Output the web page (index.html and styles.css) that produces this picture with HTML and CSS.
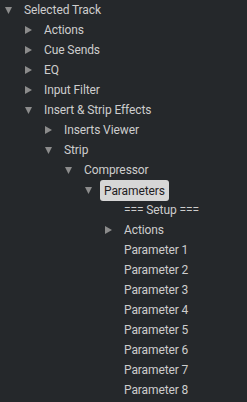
FILE: index.html
```html
<!DOCTYPE html>
<html>
<head>
<meta charset="utf-8">
<link rel="stylesheet" href="styles.css">
</head>
<body>
<div class="tree">
  <div class="row l0"><span class="tw"><svg class="down" viewBox="0 0 7 7"><polygon points="0,0 7,0 3.5,7"/></svg></span><span class="label">Selected Track</span></div>
  <div class="row l1"><span class="tw"><svg class="right" viewBox="0 0 7 8"><polygon points="0,0 7,4 0,8"/></svg></span><span class="label">Actions</span></div>
  <div class="row l1"><span class="tw"><svg class="right" viewBox="0 0 7 8"><polygon points="0,0 7,4 0,8"/></svg></span><span class="label">Cue Sends</span></div>
  <div class="row l1"><span class="tw"><svg class="right" viewBox="0 0 7 8"><polygon points="0,0 7,4 0,8"/></svg></span><span class="label">EQ</span></div>
  <div class="row l1"><span class="tw"><svg class="right" viewBox="0 0 7 8"><polygon points="0,0 7,4 0,8"/></svg></span><span class="label">Input Filter</span></div>
  <div class="row l1"><span class="tw"><svg class="down" viewBox="0 0 7 7"><polygon points="0,0 7,0 3.5,7"/></svg></span><span class="label">Insert &amp; Strip Effects</span></div>
  <div class="row l2"><span class="tw"><svg class="right" viewBox="0 0 7 8"><polygon points="0,0 7,4 0,8"/></svg></span><span class="label">Inserts Viewer</span></div>
  <div class="row l2"><span class="tw"><svg class="down" viewBox="0 0 7 7"><polygon points="0,0 7,0 3.5,7"/></svg></span><span class="label">Strip</span></div>
  <div class="row l3"><span class="tw"><svg class="down" viewBox="0 0 7 7"><polygon points="0,0 7,0 3.5,7"/></svg></span><span class="label">Compressor</span></div>
  <div class="row l4"><span class="tw"><svg class="down" viewBox="0 0 7 7"><polygon points="0,0 7,0 3.5,7"/></svg></span><span class="label selected">Parameters</span></div>
  <div class="row l5"><span class="tw"></span><span class="label">=== Setup ===</span></div>
  <div class="row l5"><span class="tw"><svg class="right" viewBox="0 0 7 8"><polygon points="0,0 7,4 0,8"/></svg></span><span class="label">Actions</span></div>
  <div class="row l5"><span class="tw"></span><span class="label">Parameter 1</span></div>
  <div class="row l5"><span class="tw"></span><span class="label">Parameter 2</span></div>
  <div class="row l5"><span class="tw"></span><span class="label">Parameter 3</span></div>
  <div class="row l5"><span class="tw"></span><span class="label">Parameter 4</span></div>
  <div class="row l5"><span class="tw"></span><span class="label">Parameter 5</span></div>
  <div class="row l5"><span class="tw"></span><span class="label">Parameter 6</span></div>
  <div class="row l5"><span class="tw"></span><span class="label">Parameter 7</span></div>
  <div class="row l5"><span class="tw"></span><span class="label">Parameter 8</span></div>
</div>
</body>
</html>
```
FILE: styles.css
```css
html, body {
  margin: 0;
  padding: 0;
  background: #25282b;
}
body {
  font-family: Roboto, "Noto Sans", sans-serif;
  font-size: 12px;
  color: #cdcdcd;
}
.tree {
  display: flex;
  flex-direction: column;
}
.row {
  display: flex;
  align-items: center;
  height: 20px;
  white-space: nowrap;
}
.l0 { padding-left: 4px; }
.l1 { padding-left: 24px; }
.l2 { padding-left: 44px; }
.l3 { padding-left: 64px; }
.l4 { padding-left: 84px; }
.l5 { padding-left: 104px; }
.tw {
  width: 20px;
  flex: none;
  display: flex;
  align-items: center;
  padding-left: 1px;
  box-sizing: border-box;
}
.tw svg { fill: #8c8c8c; display: block; }
.down { width: 7px; height: 7px; }
.right { width: 7px; height: 8px; }
.label {
  line-height: 19px;
  padding-top: 1px;
  letter-spacing: -0.1px;
}
.selected {
  background: #d6d6d6;
  color: #1e2023;
  border-radius: 3px;
  padding: 1px 4px 0;
  margin-left: -4px;
  line-height: 20px;
}
```
